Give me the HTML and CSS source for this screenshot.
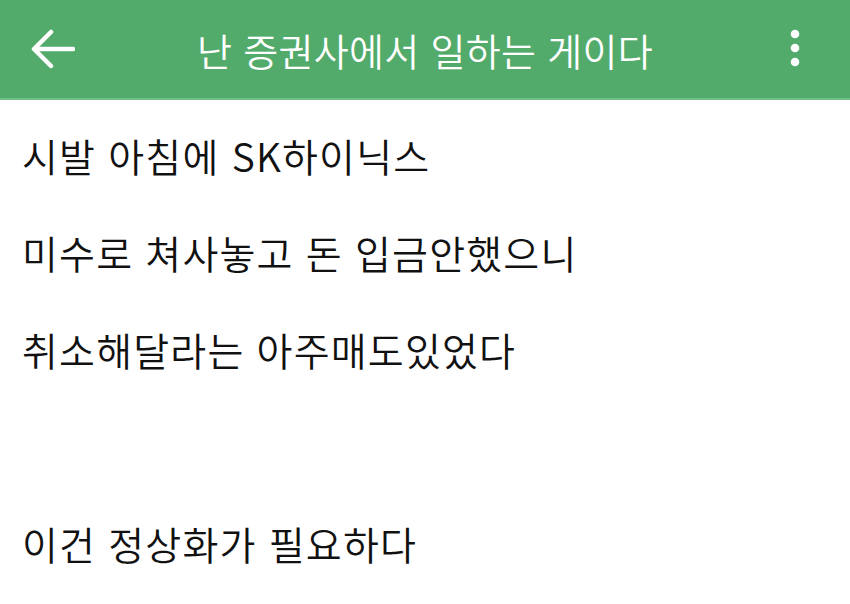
FILE: index.html
```html
<!DOCTYPE html>
<html lang="ko">
<head>
<meta charset="utf-8">
<link rel="stylesheet" href="styles.css">
</head>
<body>
<header class="appbar">
  <button class="icon-btn back" aria-label="back">
    <svg width="44" height="40" viewBox="0 0 44 40"><path d="M42 20 H4 M20 3 L3 20 L20 37" fill="none" stroke="#fff" stroke-width="4.5" stroke-linecap="round" stroke-linejoin="round"/></svg>
  </button>
  <h1 class="title">난 증권사에서 일하는 게이다</h1>
  <button class="icon-btn more" aria-label="more">
    <svg width="10" height="40" viewBox="0 0 10 40"><circle cx="5" cy="5" r="4.3" fill="#fff"/><circle cx="5" cy="19" r="4.3" fill="#fff"/><circle cx="5" cy="33" r="4.3" fill="#fff"/></svg>
  </button>
</header>
<main class="content">
  <p class="line">시발 아침에 SK하이닉스</p>
  <p class="line">미수로 쳐사놓고 돈 입금안했으니</p>
  <p class="line">취소해달라는 아주매도있었다</p>
  <p class="line">&nbsp;</p>
  <p class="line">이건 정상화가 필요하다</p>
</main>
</body>
</html>
```

FILE: styles.css
```css
html, body {
  margin: 0;
  padding: 0;
  background: #fff;
  font-family: "Noto Sans CJK KR", "Noto Sans", sans-serif;
}
.appbar {
  height: 98px;
  background: #52aa6b;
  border-bottom: 2px solid #6fbf86;
  display: grid;
  grid-template-columns: 90px 1fr 90px;
  align-items: center;
}
.icon-btn {
  background: none;
  border: 0;
  padding: 0;
  display: flex;
  align-items: center;
}
.back { margin-left: 31px; }
.more { margin-left: 30px; }
.title {
  margin: 0;
  text-align: center;
  color: #fff;
  font-size: 38px;
  font-weight: 350;
  letter-spacing: 0.3px;
  white-space: nowrap;
}
.content {
  padding: 6px 0 0 22px;
}
.line {
  margin: 0;
  height: 97px;
  display: flex;
  align-items: center;
  font-size: 39px;
  font-weight: 350;
  color: #111;
  letter-spacing: 1.2px;
}
```
